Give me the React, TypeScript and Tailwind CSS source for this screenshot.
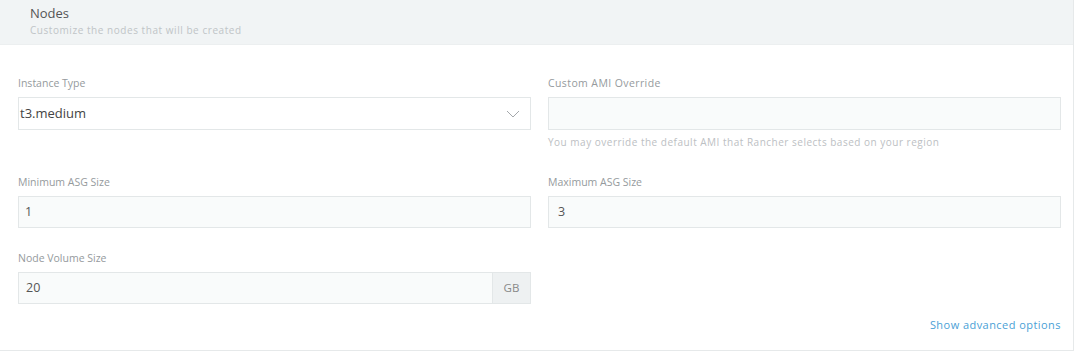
export default function App() {
  return (
    <div className="h-[352px] w-[1080px] bg-white" style={{ fontFamily: '"Open Sans", Lato, sans-serif' }}>
      <div className="h-[351px] w-[1074px] border-r border-b border-[#e6e9ea] bg-white">
        <div className="h-[45px] border-b border-[#eceff0] bg-[#f1f4f5] pl-[30px] pt-[4px]">
          <div className="text-[13px] leading-[18px] text-[#555]">Nodes</div>
          <div className="mt-[1px] text-[10px] leading-[14px] tracking-[0.55px] text-[#c0c4c7]">Customize the nodes that will be created</div>
        </div>

        <div className="pl-[18px] pr-[12px] pt-[31px]">
          <div className="grid grid-cols-2 gap-x-[17px]">
            <div>
              <label className="block text-[10.5px] leading-[14px] text-[#959a9d]">Instance Type</label>
              <div className="mt-[7px] flex h-[33px] items-center justify-between border border-[#e3e7e8] bg-white pl-[1px] pr-[10px]">
                <span className="text-[13px] text-[#444]">t3.medium</span>
                <svg width="14" height="8" viewBox="0 0 14 8" fill="none">
                  <path d="M1 1l6 6 6-6" stroke="#a4a8ab" strokeWidth="1" />
                </svg>
              </div>
            </div>
            <div>
              <label className="block text-[10.5px] leading-[14px] tracking-[0.4px] text-[#959a9d]">Custom AMI Override</label>
              <div className="mt-[7px] h-[33px] border border-[#e3e7e8] bg-[#f9fbfb]" />
              <p className="mt-[6px] text-[10px] leading-[13px] tracking-[0.5px] text-[#bcc0c3]">
                You may override the default AMI that Rancher selects based on your region
              </p>
            </div>
          </div>

          <div className="mt-[26px] grid grid-cols-2 gap-x-[17px]">
            <div>
              <label className="block text-[10.5px] leading-[14px] text-[#959a9d]">Minimum ASG Size</label>
              <div className="mt-[7px] flex h-[32px] items-center border border-[#e3e7e8] bg-[#f9fbfb] pl-[6px]">
                <span className="text-[12.5px] text-[#555]">1</span>
              </div>
            </div>
            <div>
              <label className="block text-[10.5px] leading-[14px] text-[#959a9d]">Maximum ASG Size</label>
              <div className="mt-[7px] flex h-[32px] items-center border border-[#e3e7e8] bg-[#f9fbfb] pl-[9px]">
                <span className="text-[12.5px] text-[#555]">3</span>
              </div>
            </div>
          </div>

          <div className="mt-[23px] grid grid-cols-2 gap-x-[17px]">
            <div>
              <label className="block text-[10.5px] leading-[14px] text-[#959a9d]">Node Volume Size</label>
              <div className="mt-[7px] flex h-[32px]">
                <div className="flex flex-1 items-center border border-[#e3e7e8] bg-[#f9fbfb] pl-[7px]">
                  <span className="text-[12.5px] text-[#555]">20</span>
                </div>
                <div className="flex w-[38px] items-center justify-center border-y border-r border-[#e3e7e8] bg-[#eef1f2] text-[11.5px] text-[#888]">
                  GB
                </div>
              </div>
            </div>
            <div />
          </div>

          <div className="mt-[13px] flex justify-end">
            <a className="text-[11px] tracking-[0.45px] text-[#4a9fd6]">Show advanced options</a>
          </div>
        </div>
      </div>
    </div>
  );
}
